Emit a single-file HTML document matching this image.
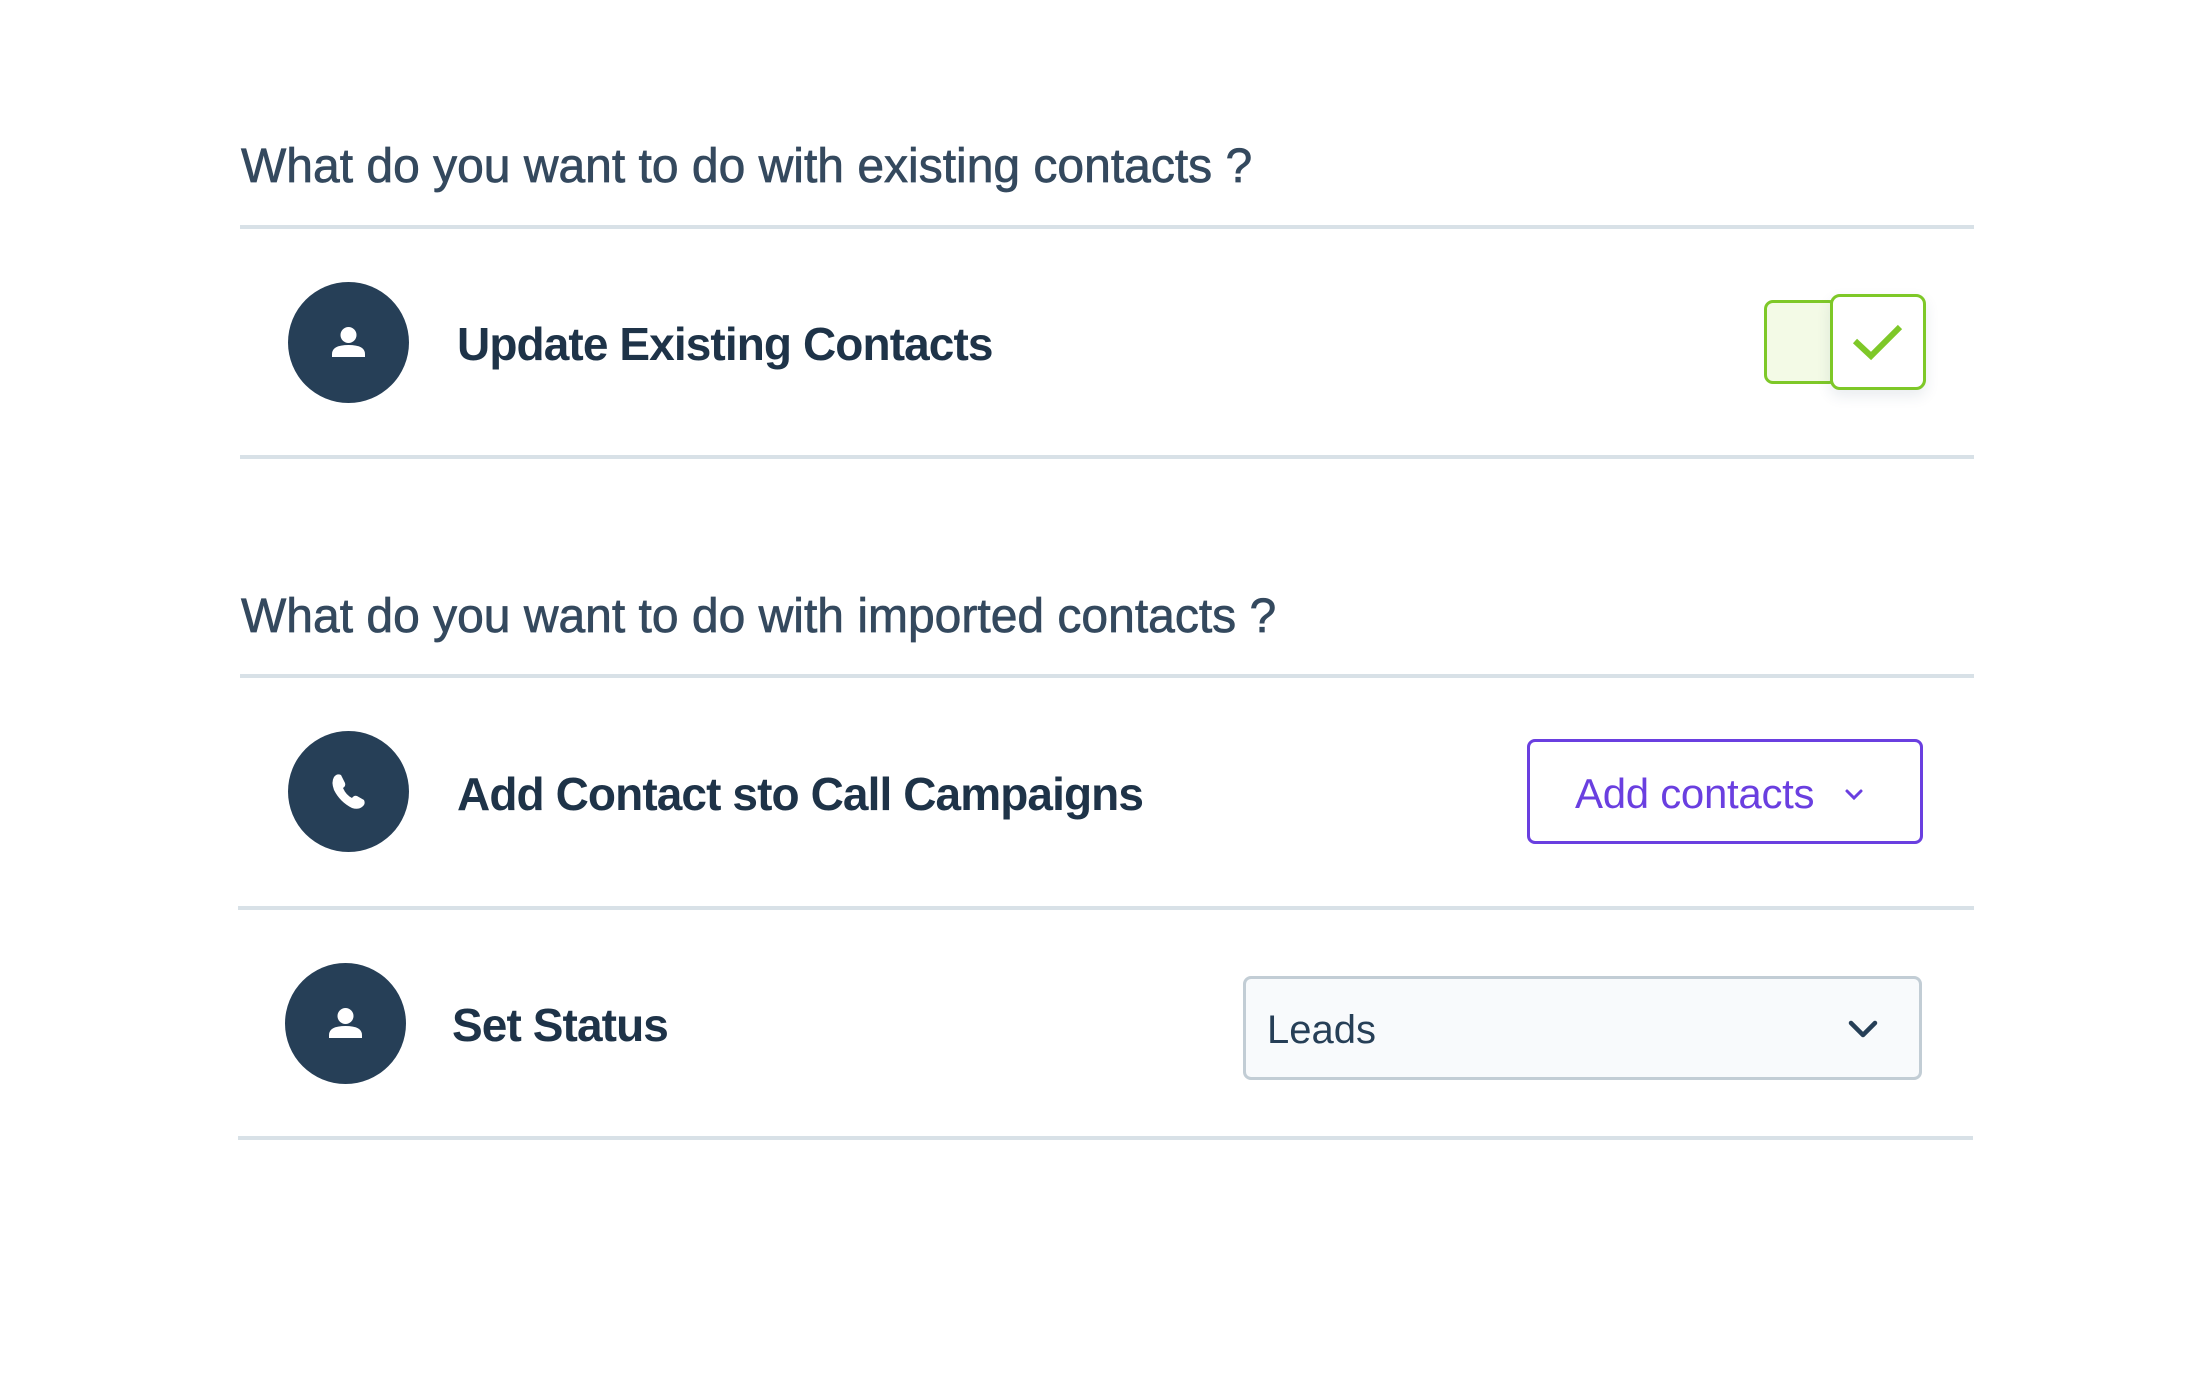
<!DOCTYPE html>
<html><head><meta charset="utf-8"><style>
*{margin:0;padding:0;box-sizing:border-box}
body{width:2202px;height:1395px;background:#fff;position:relative;font-family:"Liberation Sans",sans-serif;overflow:hidden}
.a{position:absolute}
.h{left:241px;font-size:48px;color:#34495e;white-space:nowrap;line-height:1;-webkit-text-stroke:0.7px #34495e}
.line{height:4px;background:#d8e1e7}
.c{width:121px;height:121px;border-radius:50%;background:#263f57}
.t{font-size:46px;font-weight:bold;color:#1e3348;white-space:nowrap;letter-spacing:-0.9px;line-height:1}
</style></head><body>
<div class="a h" style="top:143px">What do you want to do with existing contacts ?</div>
<div class="a line" style="left:240px;top:225px;width:1734px"></div>
<div class="a c" style="left:288px;top:282px"><svg width="121" height="121" viewBox="0 0 121 121"><circle cx="60.5" cy="53" r="8" fill="#fff"/><path d="M44 72 Q44 63 60.5 63 Q77 63 77 72 L77 75 L44 75Z" fill="#fff"/></svg></div>
<div class="a t" style="left:457px;top:321px">Update Existing Contacts</div>
<div class="a" style="left:1764px;top:300px;width:74px;height:84px;background:#f3fae6;border:3px solid #7ec828;border-radius:9px"></div>
<div class="a" style="left:1830px;top:294px;width:96px;height:96px;background:#fff;border:3px solid #7ec828;border-radius:10px;box-shadow:0 6px 14px rgba(40,70,100,0.1)"><svg width="90" height="90" viewBox="0 0 90 90"><path d="M22 44 L38 59 L67 30" stroke="#7ec828" stroke-width="6" fill="none"/></svg></div>
<div class="a line" style="left:240px;top:455px;width:1734px"></div>
<div class="a h" style="top:593px">What do you want to do with imported contacts ?</div>
<div class="a line" style="left:240px;top:674px;width:1734px"></div>
<div class="a c" style="left:288px;top:731px"><svg width="121" height="121" viewBox="0 0 121 121"><path d="M46 46 Q49 42 53 44 L57 52 Q58 55 55 57 Q58 64 64 67 Q66 64 69 65 L76 69 Q78 73 74 76 Q70 79 64 77 Q52 71 46 59 Q43 51 46 46Z" fill="#fff"/></svg></div>
<div class="a t" style="left:457px;top:771px">Add Contact sto Call Campaigns</div>
<div class="a" style="left:1527px;top:739px;width:396px;height:105px;border:3px solid #6a3fe0;border-radius:8px;background:#fff"></div>
<div class="a" style="left:1575px;top:773px;font-size:42px;color:#6a3fe0;white-space:nowrap;line-height:1;letter-spacing:-0.3px">Add contacts</div>
<svg class="a" style="left:1842px;top:783px" width="24" height="24" viewBox="0 0 24 24"><path d="M5 8 L12 15 L19 8" stroke="#6a3fe0" stroke-width="3" fill="none" stroke-linecap="round"/></svg>
<div class="a line" style="left:238px;top:906px;width:1736px"></div>
<div class="a c" style="left:285px;top:963px"><svg width="121" height="121" viewBox="0 0 121 121"><circle cx="60.5" cy="53" r="8" fill="#fff"/><path d="M44 72 Q44 63 60.5 63 Q77 63 77 72 L77 75 L44 75Z" fill="#fff"/></svg></div>
<div class="a t" style="left:452px;top:1002px">Set Status</div>
<div class="a" style="left:1243px;top:976px;width:679px;height:104px;border:3px solid #c2cdd5;border-radius:8px;background:#f8fafc"></div>
<div class="a" style="left:1267px;top:1010px;font-size:40px;color:#263f57;line-height:1">Leads</div>
<svg class="a" style="left:1843px;top:1012px" width="40" height="36" viewBox="0 0 40 36"><path d="M8 11 L20 23 L32 11" stroke="#263f57" stroke-width="4.5" fill="none" stroke-linecap="round" stroke-linejoin="round"/></svg>
<div class="a line" style="left:238px;top:1136px;width:1735px"></div>
</body></html>
